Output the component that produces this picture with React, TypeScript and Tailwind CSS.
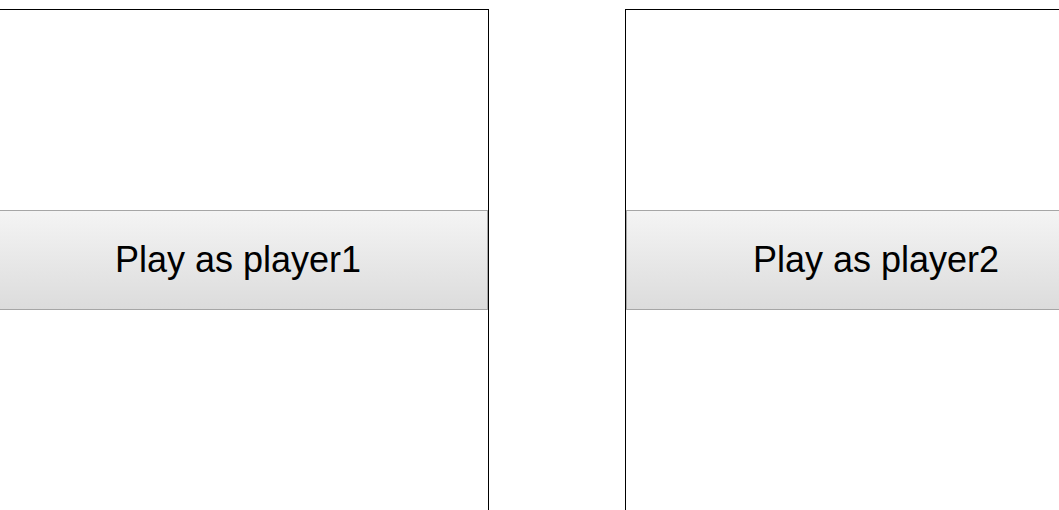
export default function App() {
  const players = ["player1", "player2"];

  return (
    <div className="h-[510px] w-[1059px] overflow-hidden bg-white font-['Liberation_Sans',Arial,sans-serif]">
      <div className="ml-[-13px] mt-[9px] flex gap-[136px]">
        {players.map((p) => (
          <div key={p} className="h-[600px] w-[502px] shrink-0 border border-black bg-white pt-[200px]">
            <button className="flex h-[100px] w-full items-center justify-center border border-[#a6a6a6] bg-gradient-to-b from-[#f4f4f4] to-[#dcdcdc] text-[36px] text-black">
              Play as {p}
            </button>
          </div>
        ))}
      </div>
    </div>
  );
}
